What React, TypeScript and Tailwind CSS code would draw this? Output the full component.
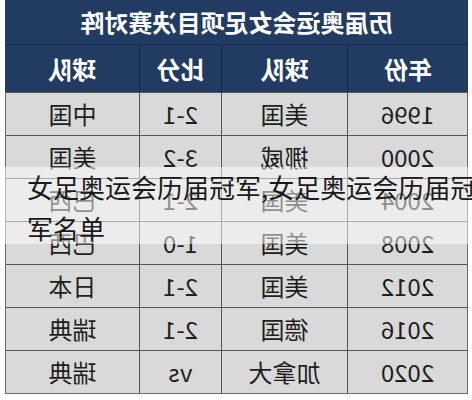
import React from "react";

const rows: [string, string, string, string][] = [
  ["1996", "美国", "2-1", "中国"],
  ["2000", "挪威", "3-2", "美国"],
  ["2004", "美国", "2-1", "巴西"],
  ["2008", "美国", "1-0", "巴西"],
  ["2012", "美国", "2-1", "日本"],
  ["2016", "德国", "2-1", "瑞典"],
  ["2020", "加拿大", "vs", "瑞典"],
];

const font = { fontFamily: '"Noto Sans CJK SC", "Noto Sans", sans-serif' };

export default function App() {
  return (
    <div className="relative w-[472px] h-[400px] overflow-hidden bg-white" style={font}>
      <div className="ml-[5px] w-[463px] -scale-x-100">
        <div className="h-[45px] bg-[#213b62] flex items-center justify-center text-white font-bold text-[24px] border-b border-[#162a47]">
          历届奥运会女足项目决赛对阵
        </div>
        <div className="grid grid-cols-[120px_126px_82px_135px] h-[47px] bg-[#213b62] text-white font-bold text-[24px]">
          {["年份", "球队", "比分", "球队"].map((h, i) => (
            <div
              key={i}
              className={
                "flex items-center justify-center " +
                (i > 0 ? "border-l border-[#142640]" : "")
              }
            >
              {h}
            </div>
          ))}
        </div>
        <div className="border-l border-r border-b border-[#6a6a6a]">
          {rows.map((r, ri) => (
            <div
              key={ri}
              className="grid grid-cols-[119px_126px_82px_134px] h-[43px] bg-[#d9d9d9] text-[#1e1e1e] text-[24px] border-t border-[#555555]"
            >
              {r.map((c, ci) => (
                <div
                  key={ci}
                  className={
                    "flex items-center justify-center " +
                    (ci > 0 ? "border-l border-[#555555]" : "")
                  }
                >
                  {c}
                </div>
              ))}
            </div>
          ))}
        </div>
      </div>
      <div className="absolute left-0 top-[167px] w-[472px] h-[77px] bg-white/50" />
      <div className="absolute left-[27px] top-[166px] w-[462px] text-[26px] leading-[41px] text-[#1a1a1a]">
        女足奥运会历届冠军,女足奥运会历届冠军名单
      </div>
    </div>
  );
}
